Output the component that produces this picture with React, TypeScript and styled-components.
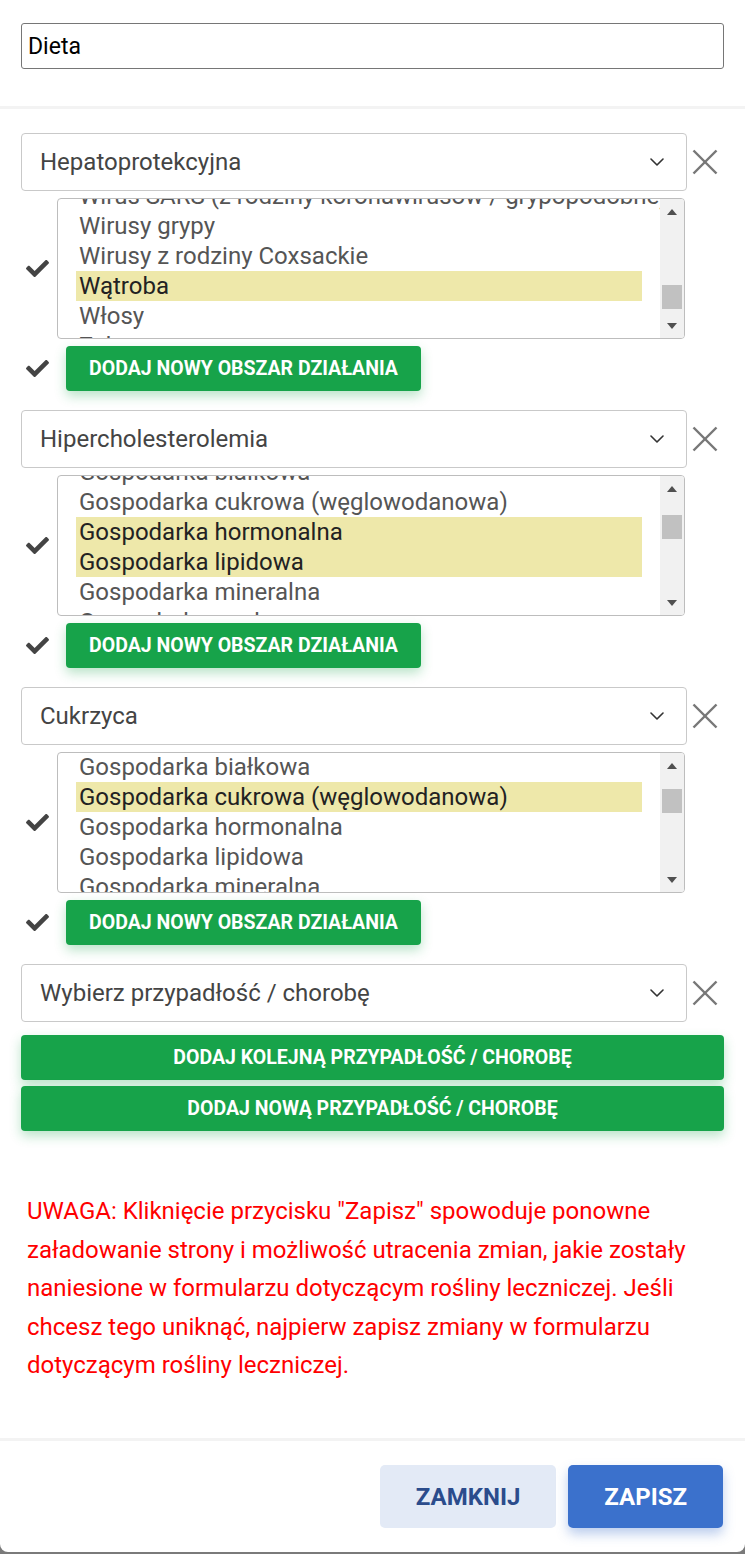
import React, { useLayoutEffect, useRef } from 'react';
import styled, { createGlobalStyle } from 'styled-components';
import { FaCheck } from 'react-icons/fa';

const GlobalStyle = createGlobalStyle`
  html, body { margin: 0; padding: 0; }
  body {
    background: #7a7a7a;
    font-family: Roboto, "Noto Sans", Arial, sans-serif;
  }
  * { box-sizing: border-box; }
`;

const Modal = styled.div`
  width: 745px;
  height: 1552px;
  background: #fff;
  border-radius: 0 0 8px 8px;
  display: flex;
  flex-direction: column;
  overflow: hidden;
`;

const Header = styled.div`
  padding: 23px 21px 37px;
  border-bottom: 3px solid #f3f3f3;
`;

const NameInput = styled.input`
  display: block;
  width: 100%;
  height: 46px;
  border: 1px solid #767676;
  border-radius: 3px;
  padding: 0 6px;
  font-family: Roboto, Arial, sans-serif;
  font-size: 23px;
  color: #000;
  outline: none;
`;

const Body = styled.div`
  flex: 1;
  padding: 24px 21px 0;
  display: flex;
  flex-direction: column;
`;

const Section = styled.div`
  display: flex;
  flex-direction: column;
  gap: 7px;
  margin-bottom: 19px;
`;

const SelectRow = styled.div`
  display: flex;
  align-items: center;
`;

const SelectBox = styled.div`
  width: 666px;
  height: 58px;
  border: 1px solid #c9c9c9;
  border-radius: 4px;
  display: flex;
  align-items: center;
  justify-content: space-between;
  padding: 0 22px 0 18px;
  font-size: 24px;
  color: #444;
`;

const RemoveButton = styled.button`
  border: none;
  background: none;
  padding: 0;
  margin-left: 5px;
  width: 26px;
  height: 26px;
  display: flex;
  cursor: pointer;
`;

const CheckRow = styled.div`
  display: flex;
  align-items: center;
`;

const CheckMark = styled.span<{ $gap: number }>`
  display: flex;
  width: 24px;
  margin-left: 5px;
  margin-right: ${(p) => p.$gap}px;
  color: #444;
`;

const ListBox = styled.div`
  width: 628px;
  height: 141px;
  border: 1px solid #bdbdbd;
  border-radius: 4px;
  display: flex;
  overflow: hidden;
`;

const Viewport = styled.div`
  flex: 1;
  overflow: hidden;
`;

const Option = styled.div<{ $selected: boolean }>`
  height: 30px;
  line-height: 30px;
  margin: 0 18px;
  padding-left: 3px;
  font-size: 24px;
  white-space: nowrap;
  color: ${(p) => (p.$selected ? '#222' : '#555')};
  background: ${(p) => (p.$selected ? '#eee8aa' : 'transparent')};
`;

const ScrollBar = styled.div`
  width: 24px;
  flex-shrink: 0;
  background: #f1f1f1;
  display: flex;
  flex-direction: column;
`;

const ArrowButton = styled.div`
  height: 25px;
  display: flex;
  align-items: center;
  justify-content: center;
`;

const ArrowUp = styled.span`
  width: 0;
  height: 0;
  border-left: 5.5px solid transparent;
  border-right: 5.5px solid transparent;
  border-bottom: 6px solid #505050;
`;

const ArrowDown = styled.span`
  width: 0;
  height: 0;
  border-left: 5.5px solid transparent;
  border-right: 5.5px solid transparent;
  border-top: 6px solid #505050;
`;

const Track = styled.div`
  flex: 1;
  display: flex;
  flex-direction: column;
  padding: 0 2px;
`;

const Thumb = styled.div`
  background: #c1c1c1;
`;

const GreenButton = styled.button<{ $full?: boolean }>`
  height: 45px;
  width: ${(p) => (p.$full ? '100%' : '355px')};
  border: none;
  border-radius: 4px;
  background: #17a34a;
  color: #fff;
  font-family: Roboto, Arial, sans-serif;
  font-weight: 700;
  font-size: 19.5px;
  text-transform: uppercase;
  box-shadow: 0 5px 12px rgba(23, 163, 74, 0.3);
  cursor: pointer;
`;

const FinalBlock = styled.div`
  display: flex;
  flex-direction: column;
  gap: 6px;
  margin-top: 13px;
`;

const Warning = styled.p`
  margin: 61px 0 0;
  padding: 0 6px;
  color: #ff0000;
  font-size: 24px;
  line-height: 38.5px;
`;

const Footer = styled.div`
  border-top: 3px solid #f3f3f3;
  padding: 24px 22px 24px 21px;
  display: flex;
  justify-content: flex-end;
  gap: 12px;
`;

const FooterButton = styled.button<{ $primary?: boolean }>`
  height: 63px;
  padding: 0 36px;
  border: none;
  border-radius: 5px;
  font-family: Roboto, Arial, sans-serif;
  font-weight: 700;
  font-size: 24px;
  text-transform: uppercase;
  background: ${(p) => (p.$primary ? '#3b71cc' : '#e3eaf6')};
  color: ${(p) => (p.$primary ? '#fff' : '#2b4c8c')};
  box-shadow: ${(p) => (p.$primary ? '0 6px 12px rgba(59, 113, 204, 0.35)' : 'none')};
  cursor: pointer;
`;

const areas = [
  'Drogi moczowe',
  'Gardło',
  'Gospodarka białkowa',
  'Gospodarka cukrowa (węglowodanowa)',
  'Gospodarka hormonalna',
  'Gospodarka lipidowa',
  'Gospodarka mineralna',
  'Gospodarka wodna',
  'Serce',
  'Skóra',
  'Układ nerwowy',
  'Wirus SARS (z rodziny koronawirusów / grypopodobne)',
  'Wirusy grypy',
  'Wirusy z rodziny Coxsackie',
  'Wątroba',
  'Włosy',
  'Zęby',
];

const sections = [
  { name: 'Hepatoprotekcyjna', selected: [14], scroll: 348 },
  { name: 'Hipercholesterolemia', selected: [4, 5], scroll: 79 },
  { name: 'Cukrzyca', selected: [3], scroll: 61 },
];

const ITEM_H = 30;
const VISIBLE_H = 139;
const TRACK_H = 139 - 50;

const Chevron = () => (
  <svg width="14" height="8" viewBox="0 0 14 8" fill="none">
    <polyline points="1,1 7,7 13,1" stroke="#333" strokeWidth="1.6" strokeLinecap="round" strokeLinejoin="round" />
  </svg>
);

const Cross = () => (
  <svg width="26" height="26" viewBox="0 0 26 26">
    <line x1="1.5" y1="1.5" x2="24.5" y2="24.5" stroke="#777" strokeWidth="2.4" />
    <line x1="24.5" y1="1.5" x2="1.5" y2="24.5" stroke="#777" strokeWidth="2.4" />
  </svg>
);

const Select: React.FC<{ label: string }> = ({ label }) => (
  <SelectRow>
    <SelectBox>
      <span>{label}</span>
      <Chevron />
    </SelectBox>
    <RemoveButton aria-label="Usuń">
      <Cross />
    </RemoveButton>
  </SelectRow>
);

const AreaList: React.FC<{ selected: number[]; scroll: number }> = ({ selected, scroll }) => {
  const ref = useRef<HTMLDivElement>(null);
  useLayoutEffect(() => {
    if (ref.current) ref.current.scrollTop = scroll;
  }, [scroll]);
  const total = areas.length * ITEM_H;
  const thumbH = (TRACK_H * VISIBLE_H) / total;
  const thumbTop = ((TRACK_H - thumbH) * scroll) / (total - VISIBLE_H);
  return (
    <ListBox>
      <Viewport ref={ref}>
        {areas.map((a, i) => (
          <Option key={a} $selected={selected.includes(i)}>
            {a}
          </Option>
        ))}
      </Viewport>
      <ScrollBar>
        <ArrowButton>
          <ArrowUp />
        </ArrowButton>
        <Track>
          <Thumb style={{ marginTop: thumbTop, height: thumbH }} />
        </Track>
        <ArrowButton>
          <ArrowDown />
        </ArrowButton>
      </ScrollBar>
    </ListBox>
  );
};

export default function App() {
  return (
    <>
      <GlobalStyle />
      <Modal>
        <Header>
          <NameInput defaultValue="Dieta" />
        </Header>
        <Body>
          {sections.map((s) => (
            <Section key={s.name}>
              <Select label={s.name} />
              <CheckRow>
                <CheckMark $gap={7}>
                  <FaCheck size={23} />
                </CheckMark>
                <AreaList selected={s.selected} scroll={s.scroll} />
              </CheckRow>
              <CheckRow>
                <CheckMark $gap={16}>
                  <FaCheck size={23} />
                </CheckMark>
                <GreenButton>Dodaj nowy obszar działania</GreenButton>
              </CheckRow>
            </Section>
          ))}
          <Select label="Wybierz przypadłość / chorobę" />
          <FinalBlock>
            <GreenButton $full>Dodaj kolejną przypadłość / chorobę</GreenButton>
            <GreenButton $full>Dodaj nową przypadłość / chorobę</GreenButton>
          </FinalBlock>
          <Warning>
            UWAGA: Kliknięcie przycisku "Zapisz" spowoduje ponowne załadowanie strony i możliwość utracenia zmian,
            jakie zostały naniesione w formularzu dotyczącym rośliny leczniczej. Jeśli chcesz tego uniknąć, najpierw
            zapisz zmiany w formularzu dotyczącym rośliny leczniczej.
          </Warning>
        </Body>
        <Footer>
          <FooterButton>Zamknij</FooterButton>
          <FooterButton $primary>Zapisz</FooterButton>
        </Footer>
      </Modal>
    </>
  );
}
